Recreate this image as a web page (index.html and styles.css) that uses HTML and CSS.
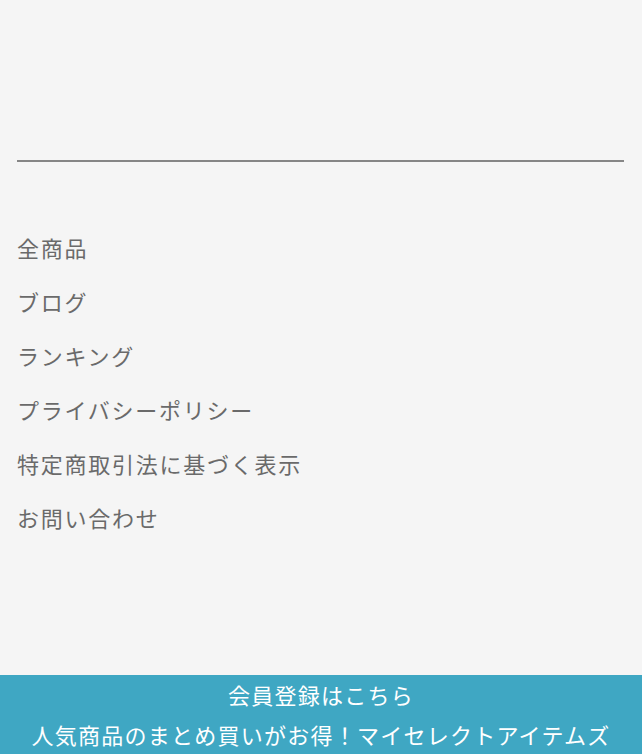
FILE: index.html
```html
<!DOCTYPE html>
<html lang="ja">
<head>
    <meta charset="UTF-8">
    <meta name="viewport" content="width=device-width, initial-scale=1.0">
    <title>メニュー | マイセレクトアイテムズ</title>
    <link rel="stylesheet" href="styles.css">
</head>
<body>
    <div class="menu">
        <hr class="menu-line">
        <nav class="menu-links">
            <a href="#">全商品</a>
            <a href="#">ブログ</a>
            <a href="#">ランキング</a>
            <a href="#">プライバシーポリシー</a>
            <a href="#">特定商取引法に基づく表示</a>
            <a href="#">お問い合わせ</a>
        </nav>
    </div>

    <!-- 会員登録バナー -->
    <a href="#" class="signup-bar">
        <span>会員登録はこちら</span>
        <span>人気商品のまとめ買いがお得！マイセレクトアイテムズ</span>
    </a>
</body>
</html>
```

FILE: styles.css
```css
* {
    margin: 0;
    padding: 0;
    box-sizing: border-box;
    font-family: 'Noto Sans CJK JP', 'Noto Sans', sans-serif;
}

:root {
    --bg: #f5f5f5;
    --text: #6a6a6a;
    --line: #7a7a7a;
    --accent: #3fa7c3;
}

body {
    background-color: var(--bg);
    color: var(--text);
    min-height: 100vh;
}

.menu {
    padding: 160px 18px 0 17px;
}

.menu-line {
    border: none;
    border-top: 2px solid var(--line);
    opacity: 0.9;
}

.menu-links {
    display: flex;
    flex-direction: column;
    padding-top: 58px;
}

.menu-links a {
    color: var(--text);
    text-decoration: none;
    font-size: 22px;
    letter-spacing: 1.75px;
    line-height: 54px;
}

/* 下部固定バー */
.signup-bar {
    position: fixed;
    left: 0;
    right: 0;
    bottom: 0;
    height: 79px;
    padding-bottom: 2px;
    display: flex;
    flex-direction: column;
    align-items: center;
    justify-content: center;
    background-color: var(--accent);
    color: #ffffff;
    text-decoration: none;
    font-size: 22px;
    letter-spacing: 1.25px;
    line-height: 40px;
}
```
